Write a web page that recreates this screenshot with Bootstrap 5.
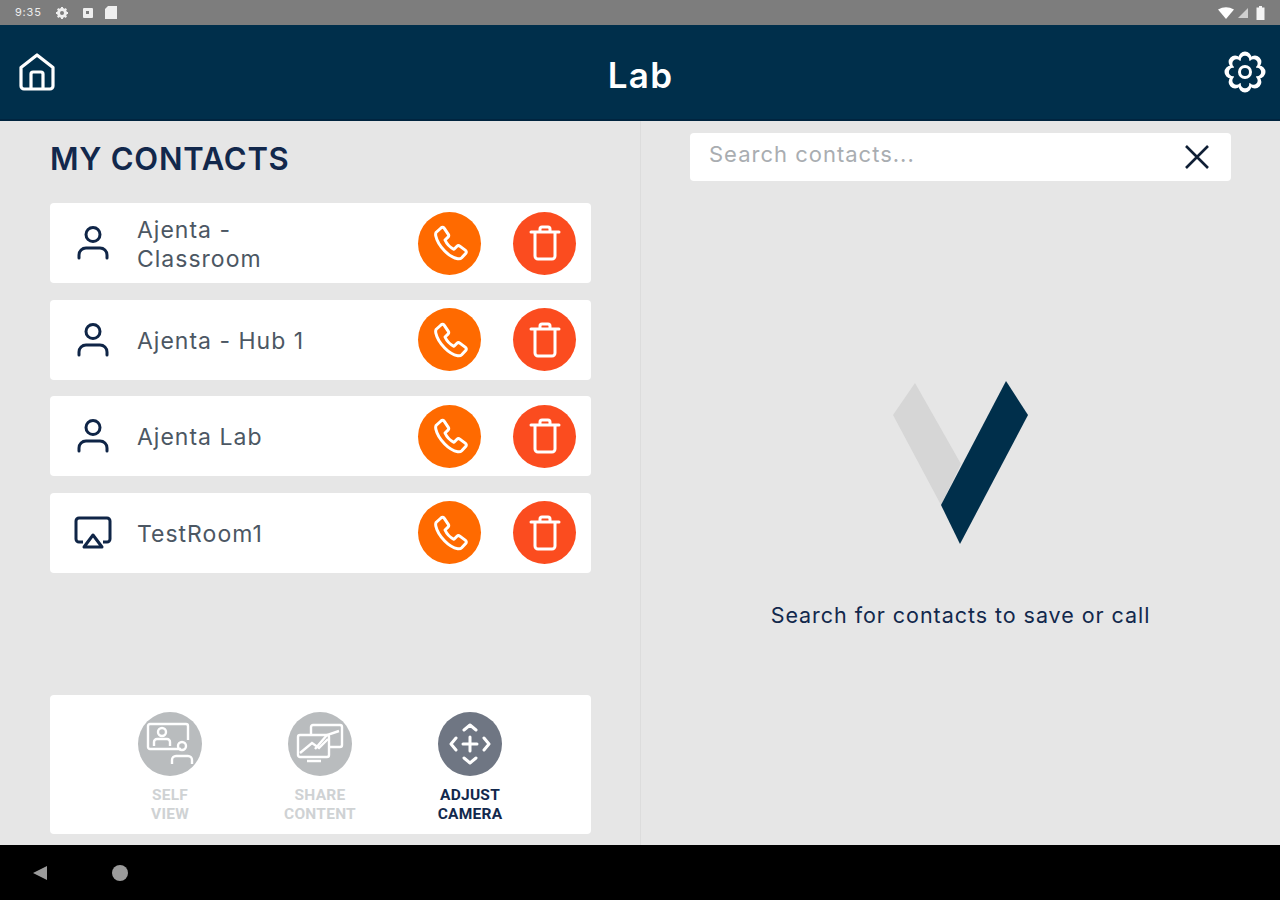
<!DOCTYPE html>
<html lang="en">
<head>
<meta charset="utf-8">
<title>Lab</title>
<link rel="stylesheet" href="https://cdn.jsdelivr.net/npm/bootstrap@5.3.0/dist/css/bootstrap.min.css">
<style>
html,body{height:900px;overflow:hidden}
body{font-family:"Inter","Open Sans",sans-serif;background:#e6e6e6;color:#12284c}
.app-frame{height:900px}
.status-strip{height:25px;background:#7d7d7d;color:#eee;font-size:11px;letter-spacing:.8px;padding:0 15px}
.status-strip svg{display:block}
.status-time{width:32px}
.top-bar{height:96px;background:#002f4b;border-bottom:2px solid #00243f;color:#fff;padding:0 13px 0 18px}
.top-title{font-size:35px;font-weight:600;letter-spacing:1.3px;padding-top:6px;margin-left:2px}
.work-area{height:724px}
.pane-left{width:641px;border-right:1px solid #dcdcdc;padding:0 49px 11px 50px}
.pane-right{width:639px;padding:12px 49px 0 49px}
.pane-title{font-size:31px;font-weight:600;letter-spacing:.75px;line-height:36px;margin:20px 0 26px;color:#12284c}
.contact-stack{gap:16.5px}
.contact-row{height:80px;background:#fff;border-radius:4px;padding:0 15px 0 24px}
.contact-icon{width:40px;flex:none;margin-right:23px}
.contact-name{font-size:23px;line-height:29px;color:#4c5763;width:150px;font-weight:400;letter-spacing:1px;padding-top:3px}
.round-btn{width:63px;height:63px;border-radius:50%;border:0;padding:0;flex:none}
.btn-call{background:#ff6a00}
.btn-bin{background:#fb4c1f;margin-left:32px}
.tools-box{height:139px;background:#fff;border-radius:4px;padding:17px 0 0 88px;gap:86px}
.tool-item{width:64px;font-family:"Roboto",sans-serif;font-size:15.5px;line-height:19px;font-weight:700;letter-spacing:.25px;text-align:center;color:#cfd2d4}
.tool-item.is-on{color:#12284c}
.tool-disc{width:64px;height:64px;border-radius:50%;background:#b9bcbe;margin-bottom:10px}
.is-on .tool-disc{background:#6f7683}
.tool-label{margin:0 -10px}
.search-box{height:48px;background:#fff;border-radius:4px;padding:0 21px 0 19px;font-size:22px;letter-spacing:1px;color:#a9adb1}
.search-text{padding-bottom:5px}
.logo-slot{margin-top:200px}
.hint-text{font-size:21.500px;color:#12284c;margin-top:54px;letter-spacing:.95px}
.nav-strip{height:55px;background:#000;padding-left:32px;gap:64px}
</style>
</head>
<body>
<svg width="0" height="0" class="d-none"><defs>
  <g id="cog-shape"><circle cx="22" cy="22" r="14"/><rect x="17" y="3" width="10" height="38" rx="5"/><rect x="17" y="3" width="10" height="38" rx="5" transform="rotate(45 22 22)"/><rect x="17" y="3" width="10" height="38" rx="5" transform="rotate(90 22 22)"/><rect x="17" y="3" width="10" height="38" rx="5" transform="rotate(135 22 22)"/></g>
  <g id="phone-shape"><path d="M6 9.500 11 5c1.300-1 2.500-.8 3.300.3l4 6c.6 1 .5 2-.3 2.800L15 17c1.800 4 5 7.400 9 9.300l3-3c.8-.8 1.900-.9 2.800-.2l5.700 4.300c1 .8 1.100 2 .2 3l-4 4.300c-1 1-2.400 1.300-4 1-4-.7-9-3.600-13-7.700S7 18.500 5.800 13c-.3-1.400-.2-2.600.2-3.500z" fill="none" stroke="#fff" stroke-width="3" stroke-linejoin="round"/></g>
  <g id="bin-shape"><path d="M3 8h28M12 8V5a2 2 0 0 1 2-2h6a2 2 0 0 1 2 2v3M7 8v24a3 3 0 0 0 3 3h14a3 3 0 0 0 3-3V8" fill="none" stroke="#fff" stroke-width="3" stroke-linejoin="round" stroke-linecap="round"/></g>
  <g id="person-shape"><circle cx="19" cy="10.500" r="7"/><path d="M5 34v-3a7 7 0 0 1 7-7h14a7 7 0 0 1 7 7v3"/></g>
</defs></svg>
<div class="app-frame d-flex flex-column">
  <div class="status-strip d-flex align-items-center justify-content-between">
    <div class="d-flex align-items-center">
      <span class="status-time">9:35</span>
      <svg class="ms-2" width="14" height="14" viewBox="0 0 14 14"><circle cx="7" cy="7" r="3.500" fill="none" stroke="#eee" stroke-width="3"/><path d="M7 1v2M7 11v2M1 7h2M11 7h2M2.700 2.700l1.400 1.400M9.900 9.900l1.400 1.400M2.700 11.300l1.400-1.400M9.900 4.100l1.400-1.400" stroke="#eee" stroke-width="2"/></svg>
      <svg style="margin-left:13px" width="12" height="12" viewBox="0 0 12 12"><rect x="1" y="1" width="10" height="10" rx="1" fill="#eee"/><rect x="4" y="4" width="3" height="3" fill="#7d7d7d"/></svg>
      <svg style="margin-left:10px" width="14" height="15" viewBox="0 0 14 15"><path d="M4 1h9v13H1V4z" fill="#eee"/></svg>
    </div>
    <div class="d-flex align-items-center gap-1">
      <svg width="16" height="12" viewBox="0 0 16 12"><path d="M0 2.500Q8-2 16 2.500L8 12z" fill="#fff"/></svg>
      <svg width="10" height="10" viewBox="0 0 10 10"><path d="M10 0v10H0z" fill="#cfcfcf"/></svg>
      <svg class="ms-1" width="9" height="14" viewBox="0 0 9 14"><path d="M3 0h3v1.500h2.500V14H.5V1.500H3z" fill="#f4f4f4"/></svg>
    </div>
  </div>

  <div class="top-bar d-flex align-items-center justify-content-between">
    <svg width="38" height="40" viewBox="0 0 38 40" fill="none" stroke="#fff" stroke-width="3.200" stroke-linejoin="round"><path d="M19 3 3 15.500V34a3 3 0 0 0 3 3h26a3 3 0 0 0 3-3V15.500z"/><path d="M13 37V22a2 2 0 0 1 2-2h8a2 2 0 0 1 2 2v15"/></svg>
    <div class="top-title">Lab</div>
    <svg width="44" height="44" viewBox="0 0 44 44"><use href="#cog-shape" fill="#fff" stroke="#fff" stroke-width="3"/><use href="#cog-shape" fill="#002f4b" transform="translate(3.300 3.300) scale(.85)"/><circle cx="22" cy="22" r="5.500" fill="none" stroke="#fff" stroke-width="3"/></svg>
  </div>

  <div class="work-area d-flex">
    <div class="pane-left d-flex flex-column">
      <div class="pane-title">MY CONTACTS</div>
      <div class="contact-stack d-flex flex-column">
        <div class="contact-row d-flex align-items-center">
          <div class="contact-icon"><svg width="38" height="38" viewBox="0 0 38 38" fill="none" stroke="#0f2547" stroke-width="3" stroke-linecap="round"><use href="#person-shape"/></svg></div>
          <div class="contact-name me-auto">Ajenta - Classroom</div>
          <button class="round-btn btn-call d-flex align-items-center justify-content-center" aria-label="Call"><svg width="40" height="40" viewBox="0 0 40 40"><use href="#phone-shape"/></svg></button>
          <button class="round-btn btn-bin d-flex align-items-center justify-content-center" aria-label="Delete"><svg width="34" height="38" viewBox="0 0 34 38"><use href="#bin-shape"/></svg></button>
        </div>
        <div class="contact-row d-flex align-items-center">
          <div class="contact-icon"><svg width="38" height="38" viewBox="0 0 38 38" fill="none" stroke="#0f2547" stroke-width="3" stroke-linecap="round"><use href="#person-shape"/></svg></div>
          <div class="contact-name me-auto text-nowrap">Ajenta - Hub 1</div>
          <button class="round-btn btn-call d-flex align-items-center justify-content-center" aria-label="Call"><svg width="40" height="40" viewBox="0 0 40 40"><use href="#phone-shape"/></svg></button>
          <button class="round-btn btn-bin d-flex align-items-center justify-content-center" aria-label="Delete"><svg width="34" height="38" viewBox="0 0 34 38"><use href="#bin-shape"/></svg></button>
        </div>
        <div class="contact-row d-flex align-items-center">
          <div class="contact-icon"><svg width="38" height="38" viewBox="0 0 38 38" fill="none" stroke="#0f2547" stroke-width="3" stroke-linecap="round"><use href="#person-shape"/></svg></div>
          <div class="contact-name me-auto text-nowrap">Ajenta Lab</div>
          <button class="round-btn btn-call d-flex align-items-center justify-content-center" aria-label="Call"><svg width="40" height="40" viewBox="0 0 40 40"><use href="#phone-shape"/></svg></button>
          <button class="round-btn btn-bin d-flex align-items-center justify-content-center" aria-label="Delete"><svg width="34" height="38" viewBox="0 0 34 38"><use href="#bin-shape"/></svg></button>
        </div>
        <div class="contact-row d-flex align-items-center">
          <div class="contact-icon"><svg width="38" height="34" viewBox="0 0 38 34" fill="none" stroke="#0f2547" stroke-width="3" stroke-linejoin="round"><path d="M9 26H5a3 3 0 0 1-3-3V5a3 3 0 0 1 3-3h28a3 3 0 0 1 3 3v18a3 3 0 0 1-3 3h-4"/><path d="M19 19 10 31h18z"/></svg></div>
          <div class="contact-name me-auto text-nowrap">TestRoom1</div>
          <button class="round-btn btn-call d-flex align-items-center justify-content-center" aria-label="Call"><svg width="40" height="40" viewBox="0 0 40 40"><use href="#phone-shape"/></svg></button>
          <button class="round-btn btn-bin d-flex align-items-center justify-content-center" aria-label="Delete"><svg width="34" height="38" viewBox="0 0 34 38"><use href="#bin-shape"/></svg></button>
        </div>
      </div>
      <div class="tools-box d-flex mt-auto">
        <div class="tool-item">
          <div class="tool-disc d-flex align-items-center justify-content-center"><svg width="50" height="46" viewBox="0 0 50 46" fill="none" stroke="#fff" stroke-width="2.400"><path d="M36 28H5a2 2 0 0 1-2-2V5a2 2 0 0 1 2-2h36a2 2 0 0 1 2 2v14"/><circle cx="17" cy="11" r="4"/><path d="M9 25v-4a3 3 0 0 1 3-3h10a3 3 0 0 1 3 3v4"/><circle cx="37" cy="25" r="4"/><path d="M27 43v-4a4 4 0 0 1 4-4h12a4 4 0 0 1 4 4v4"/></svg></div>
          <div class="tool-label">SELF<br>VIEW</div>
        </div>
        <div class="tool-item">
          <div class="tool-disc d-flex align-items-center justify-content-center"><svg width="50" height="42" viewBox="0 0 50 42" fill="none" stroke="#fff" stroke-width="2.400"><rect x="16" y="2" width="31" height="22" rx="2"/><rect x="3" y="12" width="31" height="22" rx="2" fill="#b9bcbe"/><path d="M5 30 17 20l7 5 9-9M20 26l12-14 12-4M12 38h14"/></svg></div>
          <div class="tool-label">SHARE<br>CONTENT</div>
        </div>
        <div class="tool-item is-on">
          <div class="tool-disc d-flex align-items-center justify-content-center"><svg width="42" height="42" viewBox="0 0 42 42" fill="none" stroke="#fff" stroke-width="3" stroke-linecap="round" stroke-linejoin="round"><path d="M15 7l6-5 6 5M15 35l6 5 6-5M7 15l-5 6 5 6M35 15l5 6-5 6M21 14v14M14 21h14"/></svg></div>
          <div class="tool-label">ADJUST<br>CAMERA</div>
        </div>
      </div>
    </div>

    <div class="pane-right d-flex flex-column align-items-center">
      <div class="search-box d-flex align-items-center justify-content-between w-100">
        <span class="search-text">Search contacts...</span>
        <svg width="26" height="26" viewBox="0 0 26 26" fill="none" stroke="#0f1f35" stroke-width="2.600"><path d="M2 2l22 22M24 2 2 24"/></svg>
      </div>
      <svg class="logo-slot" width="136" height="164" viewBox="893 381 136 164"><path d="M915 383 893 415l48 90 20-41z" fill="#d6d6d6"/><path d="M1006 381l22 34-68 129-19-39z" fill="#002f4b"/></svg>
      <div class="hint-text">Search for contacts to save or call</div>
    </div>
  </div>

  <div class="nav-strip d-flex align-items-center">
    <svg width="16" height="16" viewBox="0 0 16 16"><path d="M15 1v14L1 8z" fill="#9b9b9b"/></svg>
    <svg width="16" height="16" viewBox="0 0 16 16"><circle cx="8" cy="8" r="8" fill="#9b9b9b"/></svg>
  </div>
</div>
</body>
</html>
